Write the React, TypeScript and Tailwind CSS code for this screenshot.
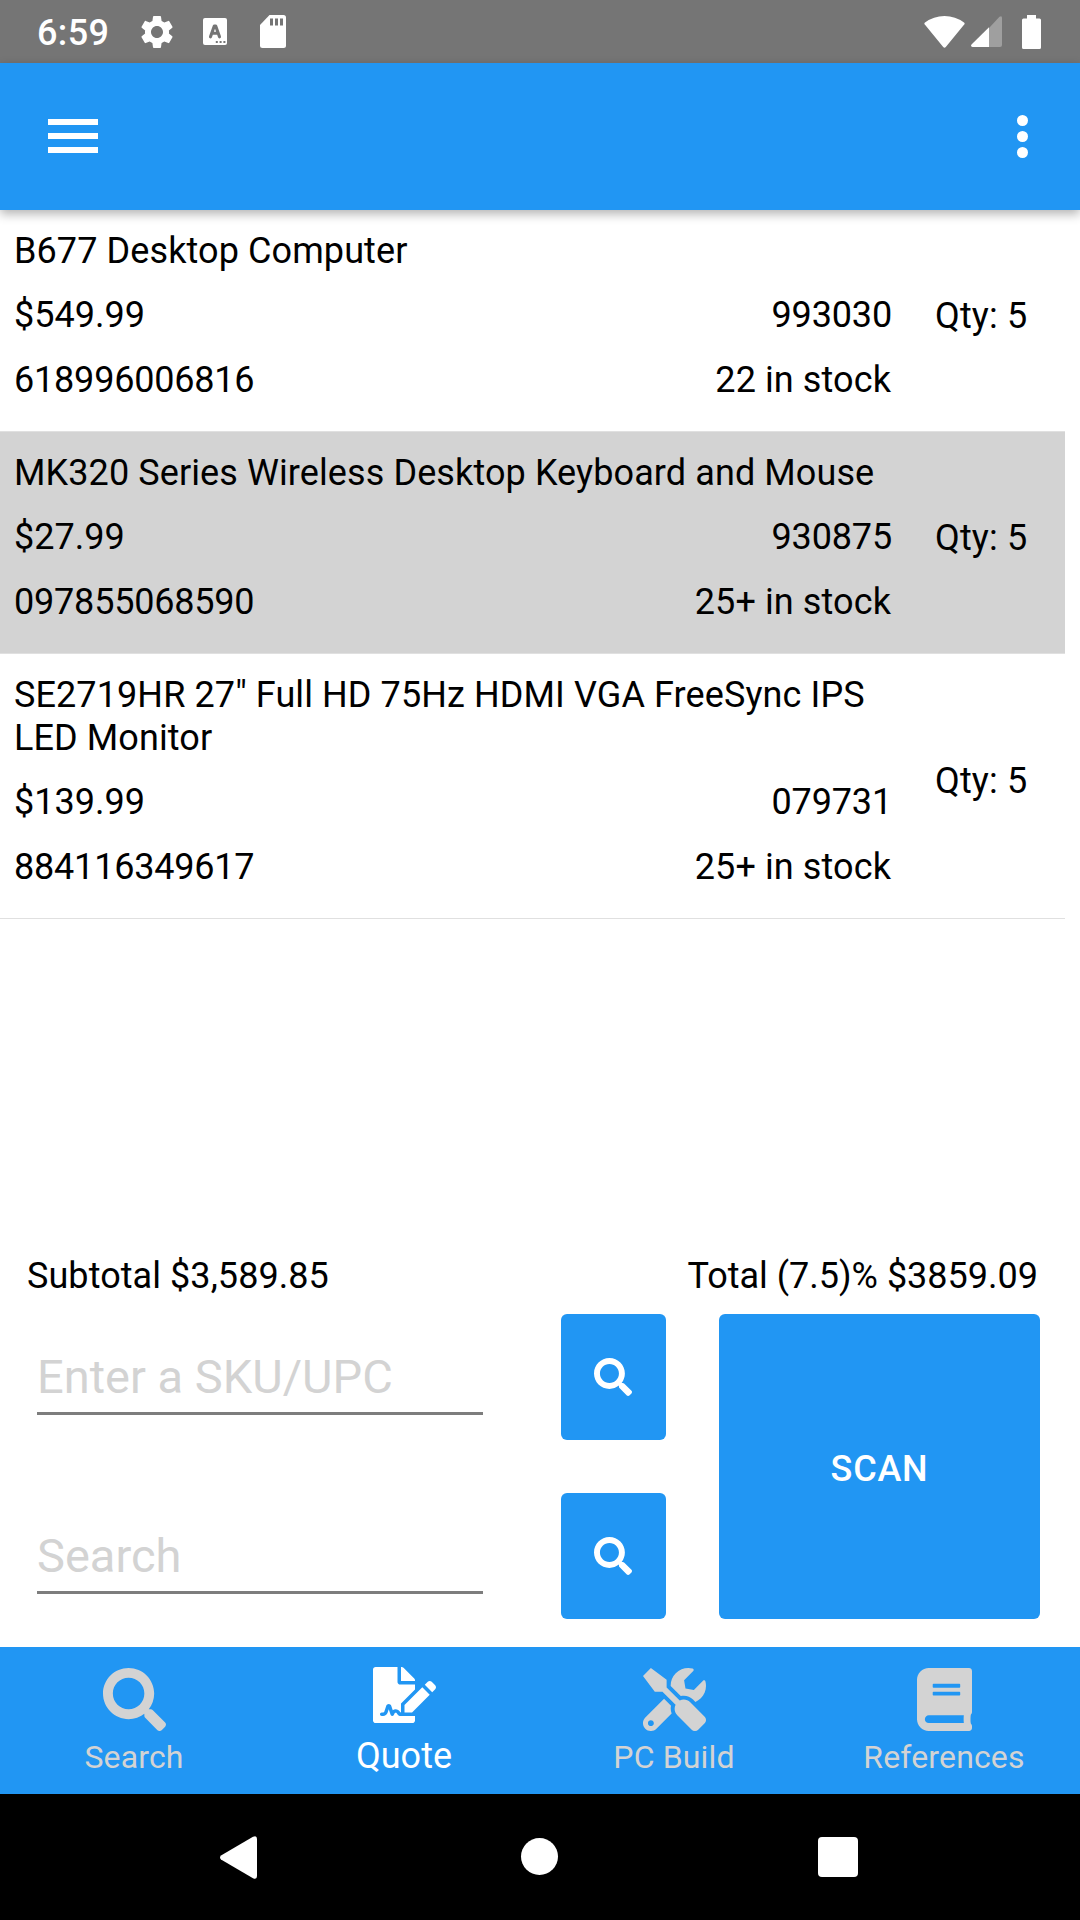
import { FaBook, FaFileSignature, FaSearch, FaTools } from "react-icons/fa";
import { MdSettings } from "react-icons/md";

const items = [
  { name: "B677 Desktop Computer", price: "$549.99", sku: "993030", upc: "618996006816", stock: "22 in stock", qty: 5, selected: false },
  { name: "MK320 Series Wireless Desktop Keyboard and Mouse", price: "$27.99", sku: "930875", upc: "097855068590", stock: "25+ in stock", qty: 5, selected: true },
  { name: 'SE2719HR 27" Full HD 75Hz HDMI VGA FreeSync IPS LED Monitor', price: "$139.99", sku: "079731", upc: "884116349617", stock: "25+ in stock", qty: 5, selected: false },
];

function StatusBar() {
  return (
    <div className="flex h-[63px] items-center bg-[#757575] pl-[37px] pr-[39px] text-white">
      <span className="w-[72px] pt-0.5 text-[36px] font-medium leading-[42px] tracking-[0.35px]">6:59</span>
      <MdSettings className="ml-7 size-10 shrink-0" />
      <svg className="ml-[26px] h-[27px] w-6 shrink-0" viewBox="0 0 24 27">
        <rect width="24" height="27" rx="2" fill="#fff" />
        <path d="M7.5 18.8 L11.3 8 H12.7 L16.5 18.8 M9 15.2 H15" fill="none" stroke="#757575" strokeWidth="3.1" strokeLinejoin="round" strokeLinecap="round" />
        <path d="M12.8 23h2v2h-2zM16.6 23h2v2h-2zM20.4 23h2v2h-2z" fill="#757575" />
      </svg>
      <svg className="ml-[33px] h-[33px] w-[26px] shrink-0" viewBox="0 0 26 33">
        <path d="M9.5 0H23.5Q26 0 26 2.5V30.5Q26 33 23.5 33H2.5Q0 33 0 30.5V10Z" fill="#fff" />
        <path d="M10 3.5h3v7h-3zM15 3.5h3v7h-3zM20 3.5h3v7h-3z" fill="#757575" />
      </svg>
      <svg className="ml-auto h-8 w-[41px] shrink-0" viewBox="0 0 41 32">
        <path d="M0.8 8.6Q-0.2 7.5 1 6.6Q9.5 0 20.5 0T40 6.6Q41.2 7.5 40.2 8.6L21.8 31Q20.5 32.4 19.2 31Z" fill="#fff" />
      </svg>
      <svg className="ml-1.5 h-[31px] w-[31px] shrink-0" viewBox="0 0 31 31">
        <path d="M18 12L28.5 0.8Q31 -1 31 2V29Q31 31 29 31H18Z" fill="#9f9f9f" />
        <path d="M18 11.2V31H1.5Q-0.8 30.6 0.5 28.6Z" fill="#fff" />
      </svg>
      <svg className="ml-5 h-[34px] w-[19px] shrink-0" viewBox="0 0 19 34">
        <path d="M5 0H14V3.5H17.5Q19 3.5 19 5V32.5Q19 34 17.5 34H1.5Q0 34 0 32.5V5Q0 3.5 1.5 3.5H5Z" fill="#fff" />
      </svg>
    </div>
  );
}

function AppBar() {
  return (
    <header className="relative z-10 flex h-[147px] items-start justify-between bg-[#2196f3] pl-12 pr-[52px] shadow-[0_4px_10px_rgba(0,0,0,0.3)]">
      <button className="mt-14 flex w-[50px] flex-col gap-2" aria-label="Menu">
        <span className="h-1.5 bg-white" />
        <span className="h-1.5 bg-white" />
        <span className="h-1.5 bg-white" />
      </button>
      <button className="mt-[52px] flex flex-col gap-[5px]" aria-label="More">
        <span className="size-[11px] rounded-full bg-white" />
        <span className="size-[11px] rounded-full bg-white" />
        <span className="size-[11px] rounded-full bg-white" />
      </button>
    </header>
  );
}

function ItemRow({ item }: { item: (typeof items)[number] }) {
  return (
    <li className={`flex w-[1065px] items-center border-b border-[#e0e0e0] pb-[29px] pl-[14px] pt-5 ${item.selected ? "bg-[#d3d3d3]" : "bg-white"}`}>
      <div className="w-[878px]">
        <p className="tracking-[0.1px]">{item.name}</p>
        <div className="mt-[21px] flex justify-between">
          <span>{item.price}</span>
          <span className="tracking-[-0.15px]">{item.sku}</span>
        </div>
        <div className="mt-[22px] flex justify-between">
          <span className="tracking-[-0.2px]">{item.upc}</span>
          <span className="pr-px tracking-[0.1px]">{item.stock}</span>
        </div>
      </div>
      <span className="ml-[43px] tracking-[0.15px]">Qty: {item.qty}</span>
    </li>
  );
}

function SearchField({ placeholder }: { placeholder: string }) {
  return (
    <div className="flex h-[126px] items-start justify-between">
      <input
        className="mt-[29px] h-[72px] w-[446px] border-b-[3px] border-[#7d7d7d] pb-0.5 text-[47px] outline-none placeholder:text-[#d3d3d3] placeholder:opacity-100"
        placeholder={placeholder}
      />
      <button className="flex h-[126px] w-[105px] items-center justify-center rounded-[6px] bg-[#2196f3] pr-0.5 text-white" aria-label={placeholder}>
        <FaSearch className="size-[38px]" />
      </button>
    </div>
  );
}

const tabs = [
  { label: "Search", Icon: FaSearch, icon: "size-[63px]", active: false },
  { label: "Quote", Icon: FaFileSignature, icon: "h-[56px] w-[63px] mb-[7px] -mt-px", active: true },
  { label: "PC Build", Icon: FaTools, icon: "size-[63px]", active: false },
  { label: "References", Icon: FaBook, icon: "h-[63px] w-[55px]", active: false },
];

export default function App() {
  return (
    <div className="flex h-[1920px] w-[1080px] flex-col overflow-hidden bg-white font-[Roboto,sans-serif] text-[36px] leading-[43px] text-black">
      <StatusBar />
      <AppBar />
      <ul className="flex-1">
        {items.map((item) => (
          <ItemRow key={item.upc} item={item} />
        ))}
      </ul>
      <section className="h-[393px]">
        <div className="flex justify-between pl-[27px] pr-[42px] pt-px">
          <span className="tracking-[0.07px]">Subtotal $3,589.85</span>
          <span>Total (7.5)% $3859.09</span>
        </div>
        <div className="mt-4 flex justify-between pl-[37px] pr-10">
          <div className="flex w-[629px] flex-col gap-[53px]">
            <SearchField placeholder="Enter a SKU/UPC" />
            <SearchField placeholder="Search" />
          </div>
          <button className="h-[305px] w-[321px] rounded-[6px] bg-[#2196f3] pt-[5px] font-medium tracking-[0.8px] text-white">SCAN</button>
        </div>
      </section>
      <nav className="grid h-[147px] grid-cols-4 bg-[#2196f3]">
        {tabs.map(({ label, Icon, icon, active }) => (
          <div key={label} className={`flex flex-col items-center pr-0.5 pt-[21px] ${active ? "text-white" : "text-[#d3d3d3]"}`}>
            <Icon className={icon} />
            <span className={`mt-[5px] leading-[42px] ${active ? "text-[36px]" : "text-[32px] tracking-[0.15px]"}`}>{label}</span>
          </div>
        ))}
      </nav>
      <footer className="flex h-[126px] items-center bg-black pl-[220px]">
        <svg className="h-[43px] w-[37px]" viewBox="0 0 37 43">
          <path d="M1 19.5L33 0.8Q37 -1 37 3V40Q37 44 33 42.2L1 23.5Q-1 21.5 1 19.5Z" fill="#fff" />
        </svg>
        <span className="ml-[264px] size-[37px] -translate-y-px rounded-full bg-white" />
        <span className="ml-[260px] size-10 rounded bg-white" />
      </footer>
    </div>
  );
}
